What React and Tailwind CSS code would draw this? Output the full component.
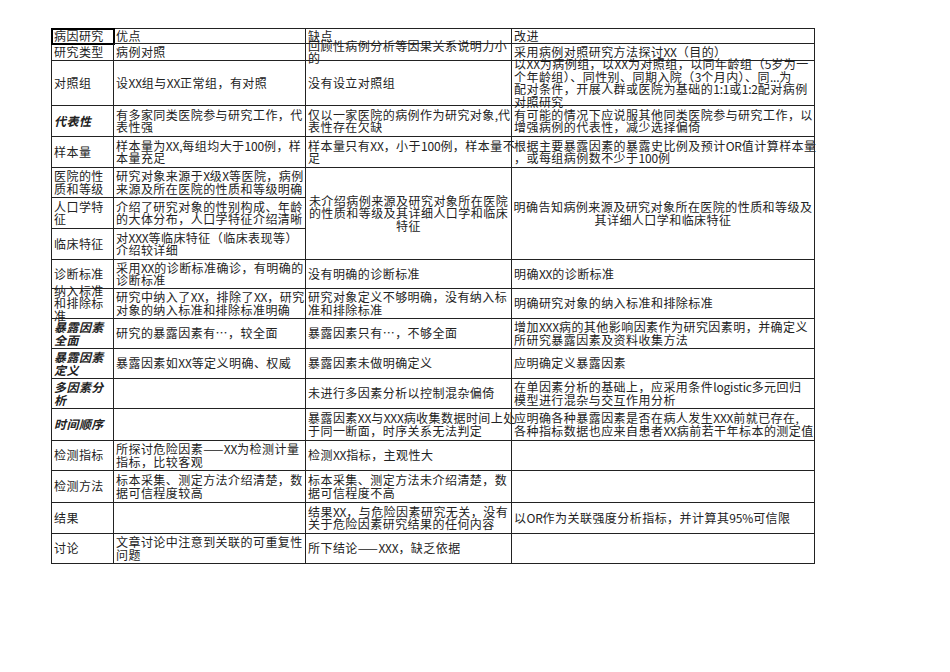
import React from 'react';

// one row of the sheet: label + three columns; merged = cols 3/4 spanning three rows
const ROWS = [
  { label: '病因研究', cells: ['优点', '缺点', '改进'], head: true },
  { label: '研究类型', cells: ['病例对照', '回顾性病例分析等因果关系说明力小\n的', '采用病例对照研究方法探讨XX（目的）'] },
  {
    label: '对照组',
    cells: [
      '设XX组与XX正常组，有对照',
      '没有设立对照组',
      '以XX为病例组，以XX为对照组，以同年龄组（5岁为一\n个年龄组）、同性别、同期入院（3个月内）、同...为\n配对条件，开展人群或医院为基础的1:1或1:2配对病例\n对照研究',
    ],
  },
  {
    label: '代表性',
    style: 'bold',
    cells: [
      '有多家同类医院参与研究工作，代\n表性强',
      '仅以一家医院的病例作为研究对象,代\n表性存在欠缺',
      '有可能的情况下应说服其他同类医院参与研究工作，以\n增强病例的代表性，减少选择偏倚',
    ],
  },
  {
    label: '样本量',
    cells: [
      '样本量为XX,每组均大于100例，样\n本量充足',
      '样本量只有XX，小于100例，样本量不\n足',
      '根据主要暴露因素的暴露史比例及预计OR值计算样本量\n，或每组病例数不少于100例',
    ],
  },
  {
    label: '医院的性\n质和等级',
    cells: ['研究对象来源于X级X等医院，病例\n来源及所在医院的性质和等级明确'],
    merged: [
      '未介绍病例来源及研究对象所在医院\n的性质和等级及其详细人口学和临床\n特征',
      '明确告知病例来源及研究对象所在医院的性质和等级及\n其详细人口学和临床特征',
    ],
  },
  { label: '人口学特\n征', cells: ['介绍了研究对象的性别构成、年龄\n的大体分布，人口学特征介绍清晰'] },
  { label: '临床特征', cells: ['对XXX等临床特征（临床表现等）\n介绍较详细'] },
  { label: '诊断标准', cells: ['采用XX的诊断标准确诊，有明确的\n诊断标准', '没有明确的诊断标准', '明确XX的诊断标准'] },
  {
    label: '纳入标准\n和排除标\n准',
    cells: [
      '研究中纳入了XX，排除了XX，研究\n对象的纳入标准和排除标准明确',
      '研究对象定义不够明确，没有纳入标\n准和排除标准',
      '明确研究对象的纳入标准和排除标准',
    ],
  },
  {
    label: '暴露因素\n全面',
    style: 'bold',
    cells: [
      '研究的暴露因素有…，较全面',
      '暴露因素只有…，不够全面',
      '增加XXX病的其他影响因素作为研究因素明，并确定义\n所研究暴露因素及资料收集方法',
    ],
  },
  { label: '暴露因素\n定义', style: 'bold', cells: ['暴露因素如XX等定义明确、权威', '暴露因素未做明确定义', '应明确定义暴露因素'] },
  {
    label: '多因素分\n析',
    style: 'italic',
    cells: ['', '未进行多因素分析以控制混杂偏倚', '在单因素分析的基础上，应采用条件logistic多元回归\n模型进行混杂与交互作用分析'],
  },
  {
    label: '时间顺序',
    style: 'italic',
    cells: [
      '',
      '暴露因素XX与XXX病收集数据时间上处\n于同一断面，时序关系无法判定',
      '应明确各种暴露因素是否在病人发生XXX前就已存在,\n各种指标数据也应来自患者XX病前若干年标本的测定值',
    ],
  },
  { label: '检测指标', cells: ['所探讨危险因素——XX为检测计量\n指标，比较客观', '检测XX指标，主观性大', ''] },
  { label: '检测方法', cells: ['标本采集、测定方法介绍清楚，数\n据可信程度较高', '标本采集、测定方法未介绍清楚，数\n据可信程度不高', ''] },
  { label: '结果', cells: ['', '结果XX，与危险因素研究无关，没有\n关于危险因素研究结果的任何内容', '以OR作为关联强度分析指标，并计算其95%可信限'] },
  { label: '讨论', cells: ['文章讨论中注意到关联的可重复性\n问题', '所下结论——XXX，缺乏依据', ''] },
];

// half-width latin runs are tight in the sheet font, so drop the extra letter spacing there
const renderText = (text) =>
  text.split(/([A-Za-z0-9.,:%]+)/).map((part, i) =>
    /^[A-Za-z0-9.,:%]+$/.test(part) ? (
      <span key={i} className="tracking-[-0.2px]">
        {part}
      </span>
    ) : (
      part
    )
  );

const Cell = ({ children, className = '', textClass = '' }) => (
  <div className={`flex items-center border-r border-b border-[#222] px-[2px] min-w-0 ${className}`}>
    {/* text sits under the grid lines like in the spreadsheet */}
    <span className={`relative -z-10 whitespace-pre ${textClass}`}>{renderText(children)}</span>
  </div>
);

export default function App() {
  const labelClass = (style) =>
    style === 'bold' ? 'font-bold italic' : style === 'italic' ? 'italic font-semibold' : '';

  return (
    <div
      className="w-[950px] h-[672px] text-[#222] text-[12px] leading-[12.5px] tracking-[0.45px] pt-[28px] pl-[51px]"
      style={{ fontFamily: '"Noto Sans CJK SC", "Noto Sans", sans-serif' }}
    >
      <div className="grid w-max border-t border-l border-[#222] grid-cols-[62px_192px_206px_303px] grid-rows-[15px_17px_45px_31px_31px_30px_31px_31px_29px_30px_30px_30px_30px_32px_30px_32px_31px_30px]">
        {ROWS.map((row, i) => (
          <React.Fragment key={i}>
            <Cell
              className={row.head ? 'outline-2 outline-black -outline-offset-1' : ''}
              textClass={labelClass(row.style)}
            >
              {row.label}
            </Cell>
            {row.cells.map((c, j) => (
              <Cell key={j}>{c}</Cell>
            ))}
            {row.merged && (
              <>
                <Cell className="row-span-3 justify-center text-center">{row.merged[0]}</Cell>
                <Cell className="row-span-3 justify-center text-center">{row.merged[1]}</Cell>
              </>
            )}
          </React.Fragment>
        ))}
      </div>
    </div>
  );
}
